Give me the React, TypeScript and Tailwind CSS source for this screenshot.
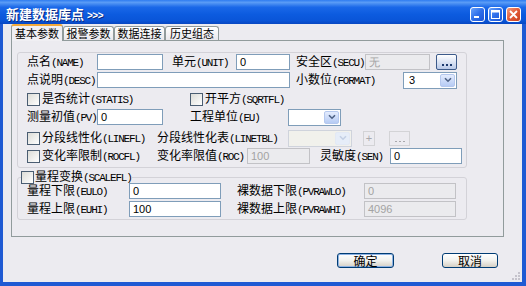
import React from 'react';

const cjk = "font-['Noto_Sans_CJK_SC','Noto_Sans_CJK_JP',sans-serif]";

// split CJK and ASCII so the ASCII part can be narrower, like SimSun half-width
function Txt({ t }: { t: string }) {
  return (
    <>
      {t
        .split(/([\x21-\x7e]+)/)
        .filter(Boolean)
        .map((p, i) =>
          /^[\x21-\x7e]+$/.test(p) ? (
            <span key={i} className="font-['Liberation_Mono',monospace] text-[11px] tracking-[-1.2px]">
              {p}
            </span>
          ) : (
            <span key={i}>{p}</span>
          )
        )}
    </>
  );
}

function Label({ w = '', t, lh = 'leading-[14px]' }: { w?: string; t: string; lh?: string }) {
  return (
    <span className={`${w} ${lh} shrink-0 whitespace-nowrap text-[12px] text-black`}>
      <Txt t={t} />
    </span>
  );
}

function Field({ w, v = '', off }: { w: string; v?: string; off?: boolean }) {
  return (
    <div
      className={`${w} h-[16px] shrink-0 border flex items-center pl-[3px] text-[11px] font-['Liberation_Sans',sans-serif] ${
        off ? 'border-[#c2c2c6] bg-[#ebebee] text-[#a3a3a3]' : 'border-[#7f9db9] bg-white text-black'
      }`}
    >
      {v}
    </div>
  );
}

function Chevron({ c }: { c: string }) {
  return (
    <svg width="8" height="6" viewBox="0 0 8 6">
      <path d="M1 1.2 L4 4.2 L7 1.2" fill="none" stroke={c} strokeWidth="1.6" />
    </svg>
  );
}

function Drop({ w, v = '', off }: { w: string; v?: string; off?: boolean }) {
  return (
    <div
      className={`${w} h-[17px] shrink-0 border flex items-center p-px ${
        off ? 'border-[#cfd3dc] bg-[#f1f1ec]' : 'border-[#7f9db9] bg-white'
      }`}
    >
      <span className="flex-1 pl-[4px] text-[11px] font-['Liberation_Sans',sans-serif] text-black">{v}</span>
      <div
        className={`w-[15px] h-[13px] rounded-[2px] border flex items-center justify-center ${
          off
            ? 'border-[#e3e9f4] bg-[#e6edf8]'
            : 'border-[#b5c8ee] bg-gradient-to-b from-[#e4ecfd] to-[#b6cbf4]'
        }`}
      >
        <Chevron c={off ? '#c3cfe4' : '#4d6185'} />
      </div>
    </div>
  );
}

function Box() {
  return (
    <span className="w-[13px] h-[13px] shrink-0 border border-[#4a5d72] bg-gradient-to-br from-[#dcdcd7] to-white" />
  );
}

function Row({ mt, children }: { mt: string; children: React.ReactNode }) {
  return <div className={`${mt} flex items-center h-[16px]`}>{children}</div>;
}

function TitleBtn({ close, children }: { close?: boolean; children: React.ReactNode }) {
  return (
    <div
      className={`w-[15px] h-[15px] rounded-[3px] border border-white flex items-center justify-center ${
        close
          ? 'bg-gradient-to-br from-[#f29a7c] via-[#e25b38] to-[#c8401f]'
          : 'bg-gradient-to-br from-[#6aa3fb] via-[#2f6fea] to-[#1c55d6]'
      }`}
    >
      {children}
    </div>
  );
}

function DlgBtn({ t, def }: { t: string; def?: boolean }) {
  return (
    <div
      className={`h-[15px] rounded-[3px] border border-[#003c74] bg-gradient-to-b from-white via-[#f2f2ee] to-[#d6d0c5] flex items-center justify-center text-[12px] leading-none text-black ${
        def ? 'w-[57px] shadow-[inset_0_0_0_1px_#8db2e3]' : 'w-[56px]'
      }`}
    >
      {t}
    </div>
  );
}

export default function App() {
  const tabs = [
    { t: '基本参数', w: 'w-[52px]' },
    { t: '报警参数', w: 'w-[51px]' },
    { t: '数据连接', w: 'w-[51px]' },
    { t: '历史组态', w: 'w-[54px]' },
  ];

  return (
    <div className={`w-[526px] h-[286px] flex flex-col ${cjk}`}>
      {/* title bar */}
      <div className="h-[24px] shrink-0 flex items-center pt-[4px] pl-[6px] pr-[5px] bg-[linear-gradient(to_bottom,#2e7cf0_0%,#5a9cf6_10%,#1a68e8_30%,#0c5bdf_60%,#0a55d8_85%,#0847c2_100%)]">
        <span className="flex-1 text-white font-bold text-[13px] leading-none [text-shadow:1px_1px_#0a2a80]">
          新建数据库点
          <span className="ml-[3px] font-['Liberation_Sans',sans-serif] text-[10px] tracking-[-0.5px]">&gt;&gt;&gt;</span>
        </span>
        <div className="flex gap-[3px]">
          <TitleBtn>
            <svg width="11" height="11" viewBox="0 0 11 11">
              <rect x="2" y="7" width="5" height="2" fill="white" />
            </svg>
          </TitleBtn>
          <TitleBtn>
            <svg width="11" height="11" viewBox="0 0 11 11">
              <rect x="1.5" y="1.5" width="8" height="8" fill="none" stroke="white" strokeWidth="1" />
              <rect x="1.5" y="1.5" width="8" height="2" fill="white" />
            </svg>
          </TitleBtn>
          <TitleBtn close>
            <svg width="11" height="11" viewBox="0 0 11 11">
              <path d="M2 2 L9 9 M9 2 L2 9" stroke="white" strokeWidth="1.8" />
            </svg>
          </TitleBtn>
        </div>
      </div>

      {/* body */}
      <div className="relative flex-1 flex flex-col bg-[#ecebf0] border-l-[3px] border-r-[4px] border-b-[4px] border-[#1f5ad3]">
        {/* tabs */}
        <div className="relative z-10 ml-[8px] h-[16px] flex items-end">
          {tabs.map((tb, i) =>
            i === 0 ? (
              <div
                key={tb.t}
                className={`${tb.w} h-[17px] -mb-px rounded-t-[3px] border-x border-[#919b9c] border-t-2 border-t-[#f3a93a] bg-[#f0eff3] flex items-center justify-center text-[11px] leading-none text-black`}
              >
                {tb.t}
              </div>
            ) : (
              <div
                key={tb.t}
                className={`${tb.w} h-[14px] rounded-t-[3px] border border-b-0 border-[#919b9c] bg-gradient-to-b from-white to-[#e9e8ec] flex items-center justify-center text-[11px] leading-none text-black`}
              >
                {tb.t}
              </div>
            )
          )}
        </div>

        {/* tab panel */}
        <div className="ml-[8px] w-[493px] h-[197px] shrink-0 border border-[#919b9c] bg-[#ecebf0] pl-[5px] pt-[11px]">
          {/* group 1 */}
          <div className="w-[450px] h-[116px] border border-[#d3d2d8] rounded-[3px] pl-[9px] pt-[1px]">
            <Row mt="mt-0">
              <Label w="w-[70px]" t="点名(NAME)" />
              <Field w="w-[66px]" />
              <Label w="w-[64px] ml-[9px]" t="单元(UNIT)" />
              <Field w="w-[54px]" v="0" />
              <Label w="w-[69px] ml-[6px]" t="安全区(SECU)" />
              <Field w="w-[65px]" v="无" off />
              <div className="ml-[6px] w-[21px] h-[16px] rounded-[2px] border border-[#3c5a8a] bg-gradient-to-b from-white to-[#b9c9e8] flex items-end justify-center pb-[3px] gap-[2px]">
                <span className="w-[2px] h-[2px] bg-[#1c3a6e]" />
                <span className="w-[2px] h-[2px] bg-[#1c3a6e]" />
                <span className="w-[2px] h-[2px] bg-[#1c3a6e]" />
              </div>
            </Row>
            <Row mt="mt-[2px]">
              <Label w="w-[70px]" t="点说明(DESC)" />
              <Field w="w-[193px]" />
              <Label w="w-[107px] ml-[6px]" t="小数位(FORMAT)" />
              <Drop w="w-[54px]" v="3" />
            </Row>
            <Row mt="mt-[3px]">
              <div className="w-[163px] flex items-center gap-[2px]">
                <Box />
                <Label t="是否统计(STATIS)" />
              </div>
              <div className="flex items-center gap-[2px]">
                <Box />
                <Label t="开平方(SQRTFL)" />
              </div>
            </Row>
            <Row mt="mt-[2px]">
              <Label w="w-[70px]" t="测量初值(PV)" />
              <Field w="w-[66px]" v="0" />
              <Label w="w-[98px] ml-[27px]" t="工程单位(EU)" />
              <Drop w="w-[53px]" />
            </Row>
            <Row mt="mt-[5px]">
              <div className="w-[130px] flex items-center gap-[2px]">
                <Box />
                <Label t="分段线性化(LINEFL)" />
              </div>
              <Label w="w-[131px]" t="分段线性化表(LINETBL)" />
              <Drop w="w-[64px]" off />
              <div className="ml-[11px] w-[12px] h-[15px] border border-[#d3d3d6] flex items-center justify-center text-[11px] text-[#a8a8ac] font-['Liberation_Sans',sans-serif]">
                +
              </div>
              <div className="ml-[14px] w-[21px] h-[15px] border border-[#d3d3d6] flex items-end justify-center pb-[3px] gap-[2px]">
                <span className="w-[2px] h-[1px] bg-[#a8a8ac]" />
                <span className="w-[2px] h-[1px] bg-[#a8a8ac]" />
                <span className="w-[2px] h-[1px] bg-[#a8a8ac]" />
              </div>
            </Row>
            <Row mt="mt-[2px]">
              <div className="w-[130px] flex items-center gap-[2px]">
                <Box />
                <Label t="变化率限制(ROCFL)" />
              </div>
              <Label w="w-[90px]" t="变化率限值(ROC)" />
              <Field w="w-[63px]" v="100" off />
              <Label w="w-[70px] ml-[10px]" t="灵敏度(SEN)" />
              <Field w="w-[72px]" v="0" />
            </Row>
          </div>

          {/* group 2 */}
          <fieldset className="mt-[3px] w-[450px] border border-[#d3d2d8] rounded-[3px] pl-[3px] pb-[2px]">
            <legend className="h-[12px] flex items-center gap-px">
              <Box />
              <Label t="量程变换(SCALEFL)" lh="leading-[12px]" />
            </legend>
            <div className="ml-[6px]">
              <Row mt="mt-0">
                <Label w="w-[102px]" t="量程下限(EULO)" lh="leading-[12px]" />
                <Field w="w-[92px]" v="0" />
                <Label w="w-[127px] ml-[16px]" t="裸数据下限(PVRAWLO)" lh="leading-[12px]" />
                <Field w="w-[92px]" v="0" off />
              </Row>
              <Row mt="mt-[2px]">
                <Label w="w-[102px]" t="量程上限(EUHI)" />
                <Field w="w-[92px]" v="100" />
                <Label w="w-[127px] ml-[16px]" t="裸数据上限(PVRAWHI)" />
                <Field w="w-[92px]" v="4096" off />
              </Row>
            </div>
          </fieldset>
        </div>

        {/* buttons */}
        <div className="mt-[16px] flex justify-end gap-[48px] pr-[24px]">
          <DlgBtn t="确定" def />
          <DlgBtn t="取消" />
        </div>

        {/* resize grip */}
        <svg className="absolute right-[1px] bottom-[1px]" width="11" height="11" viewBox="0 0 11 11">
          {[
            [8, 2],
            [5, 5],
            [8, 5],
            [2, 8],
            [5, 8],
            [8, 8],
          ].map(([x, y]) => (
            <rect key={`${x}-${y}`} x={x} y={y} width="2" height="2" fill="#c5c3cc" />
          ))}
        </svg>
      </div>
    </div>
  );
}
